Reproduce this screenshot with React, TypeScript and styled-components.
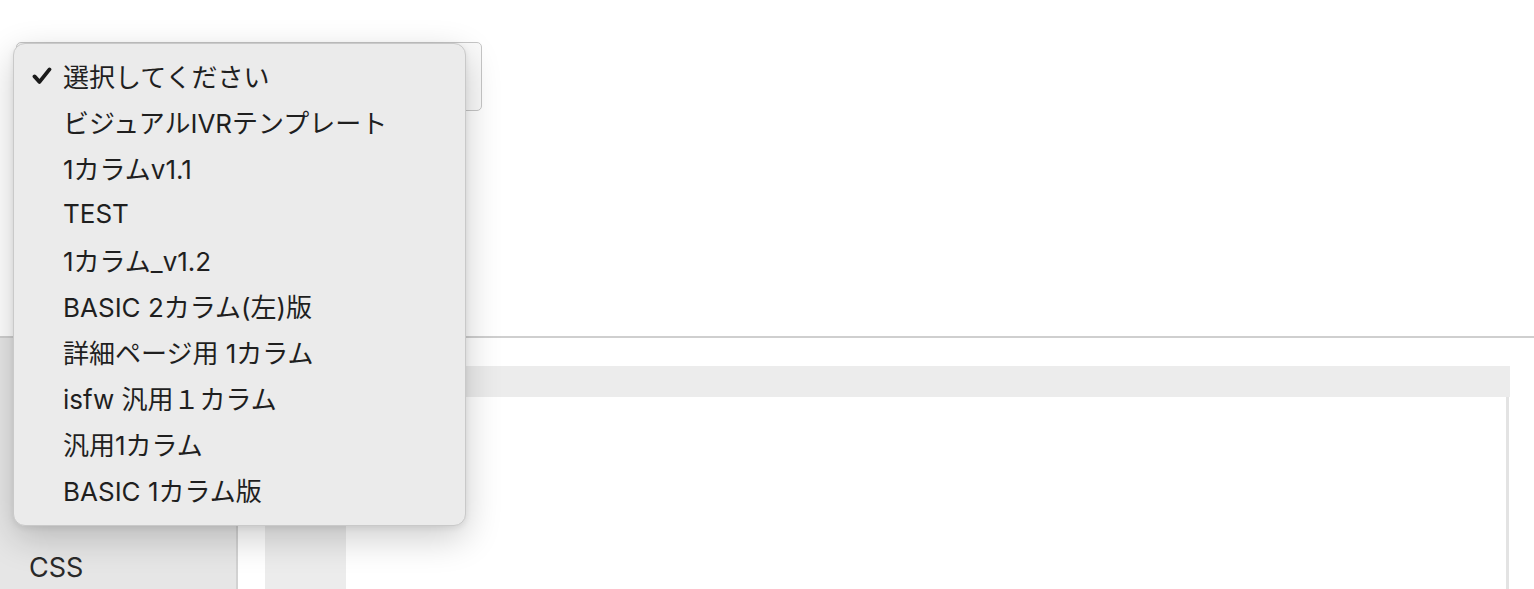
import styled, { createGlobalStyle } from "styled-components";

const GlobalStyle = createGlobalStyle`
  html, body {
    margin: 0;
    padding: 0;
    background: #ffffff;
    overflow: hidden;
  }
  body {
    font-family: Inter, "Noto Sans CJK JP", sans-serif;
    color: #222;
  }
`;

const Page = styled.div`
  position: relative;
  width: 1534px;
  height: 589px;
  overflow: hidden;
  display: flex;
  flex-direction: column;
`;

const TopArea = styled.div`
  height: 338px;
  flex-shrink: 0;
  padding: 42px 0 0 16px;
  box-sizing: border-box;
  border-bottom: 2px solid #cfcfcf;
`;

const SelectBox = styled.div`
  width: 466px;
  height: 69px;
  box-sizing: border-box;
  border: 1.5px solid #c6c6c6;
  border-radius: 5px;
  background: #fafafa;
`;

const Body = styled.div`
  flex: 1;
  display: flex;
`;

const Sidebar = styled.div`
  width: 236px;
  background: #e6e6e6;
  border-right: 2px solid #d2d2d2;
  display: flex;
  flex-direction: column;
  justify-content: flex-end;
`;

const SideItem = styled.div`
  padding: 0 0 1px 29px;
  font-size: 27px;
  line-height: 40px;
  color: #2a2a2a;
`;

const Editor = styled.div`
  flex: 1;
  padding: 28px 25px 0 27px;
  display: flex;
  flex-direction: column;
`;

const EditorFrame = styled.div`
  flex: 1;
  display: flex;
  flex-direction: column;
  border-right: 3px solid #e3e3e3;
`;

const HeaderBar = styled.div`
  height: 31px;
  background: #ececec;
  margin-right: -4px;
`;

const CodeArea = styled.div`
  flex: 1;
  display: flex;
`;

const Gutter = styled.div`
  width: 81px;
  background: #ececec;
`;

const Menu = styled.div`
  position: absolute;
  left: 13px;
  top: 43px;
  width: 453px;
  box-sizing: border-box;
  padding: 8px 0 13px;
  background: #ebebeb;
  border: 1px solid #c9c9c9;
  border-radius: 12px;
  box-shadow: 0 12px 36px rgba(0, 0, 0, 0.2), 0 2px 6px rgba(0, 0, 0, 0.08);
`;

const Option = styled.div`
  height: 46px;
  display: flex;
  align-items: center;
  padding-left: 49px;
  position: relative;
  font-size: 26px;
  color: #1f1f1f;
  white-space: nowrap;
`;

const Check = styled.svg`
  position: absolute;
  left: 18px;
  top: 50%;
  transform: translateY(-45%);
`;

const options = [
  "選択してください",
  "ビジュアルIVRテンプレート",
  "1カラムv1.1",
  "TEST",
  "1カラム_v1.2",
  "BASIC 2カラム(左)版",
  "詳細ページ用 1カラム",
  "isfw 汎用１カラム",
  "汎用1カラム",
  "BASIC 1カラム版",
];

export default function App() {
  return (
    <>
      <GlobalStyle />
      <Page>
        <TopArea>
          <SelectBox />
        </TopArea>
        <Body>
          <Sidebar>
            <SideItem>CSS</SideItem>
          </Sidebar>
          <Editor>
            <EditorFrame>
              <HeaderBar />
              <CodeArea>
                <Gutter />
              </CodeArea>
            </EditorFrame>
          </Editor>
        </Body>
        <Menu>
          {options.map((o, i) => (
            <Option key={o}>
              {i === 0 && (
                <Check width="20" height="18" viewBox="0 0 20 18">
                  <path
                    d="M2.5 9.5 L7.5 15 L17.5 2.5"
                    fill="none"
                    stroke="#1a1a1a"
                    strokeWidth="3.8"
                    strokeLinecap="round"
                    strokeLinejoin="round"
                  />
                </Check>
              )}
              {o}
            </Option>
          ))}
        </Menu>
      </Page>
    </>
  );
}
